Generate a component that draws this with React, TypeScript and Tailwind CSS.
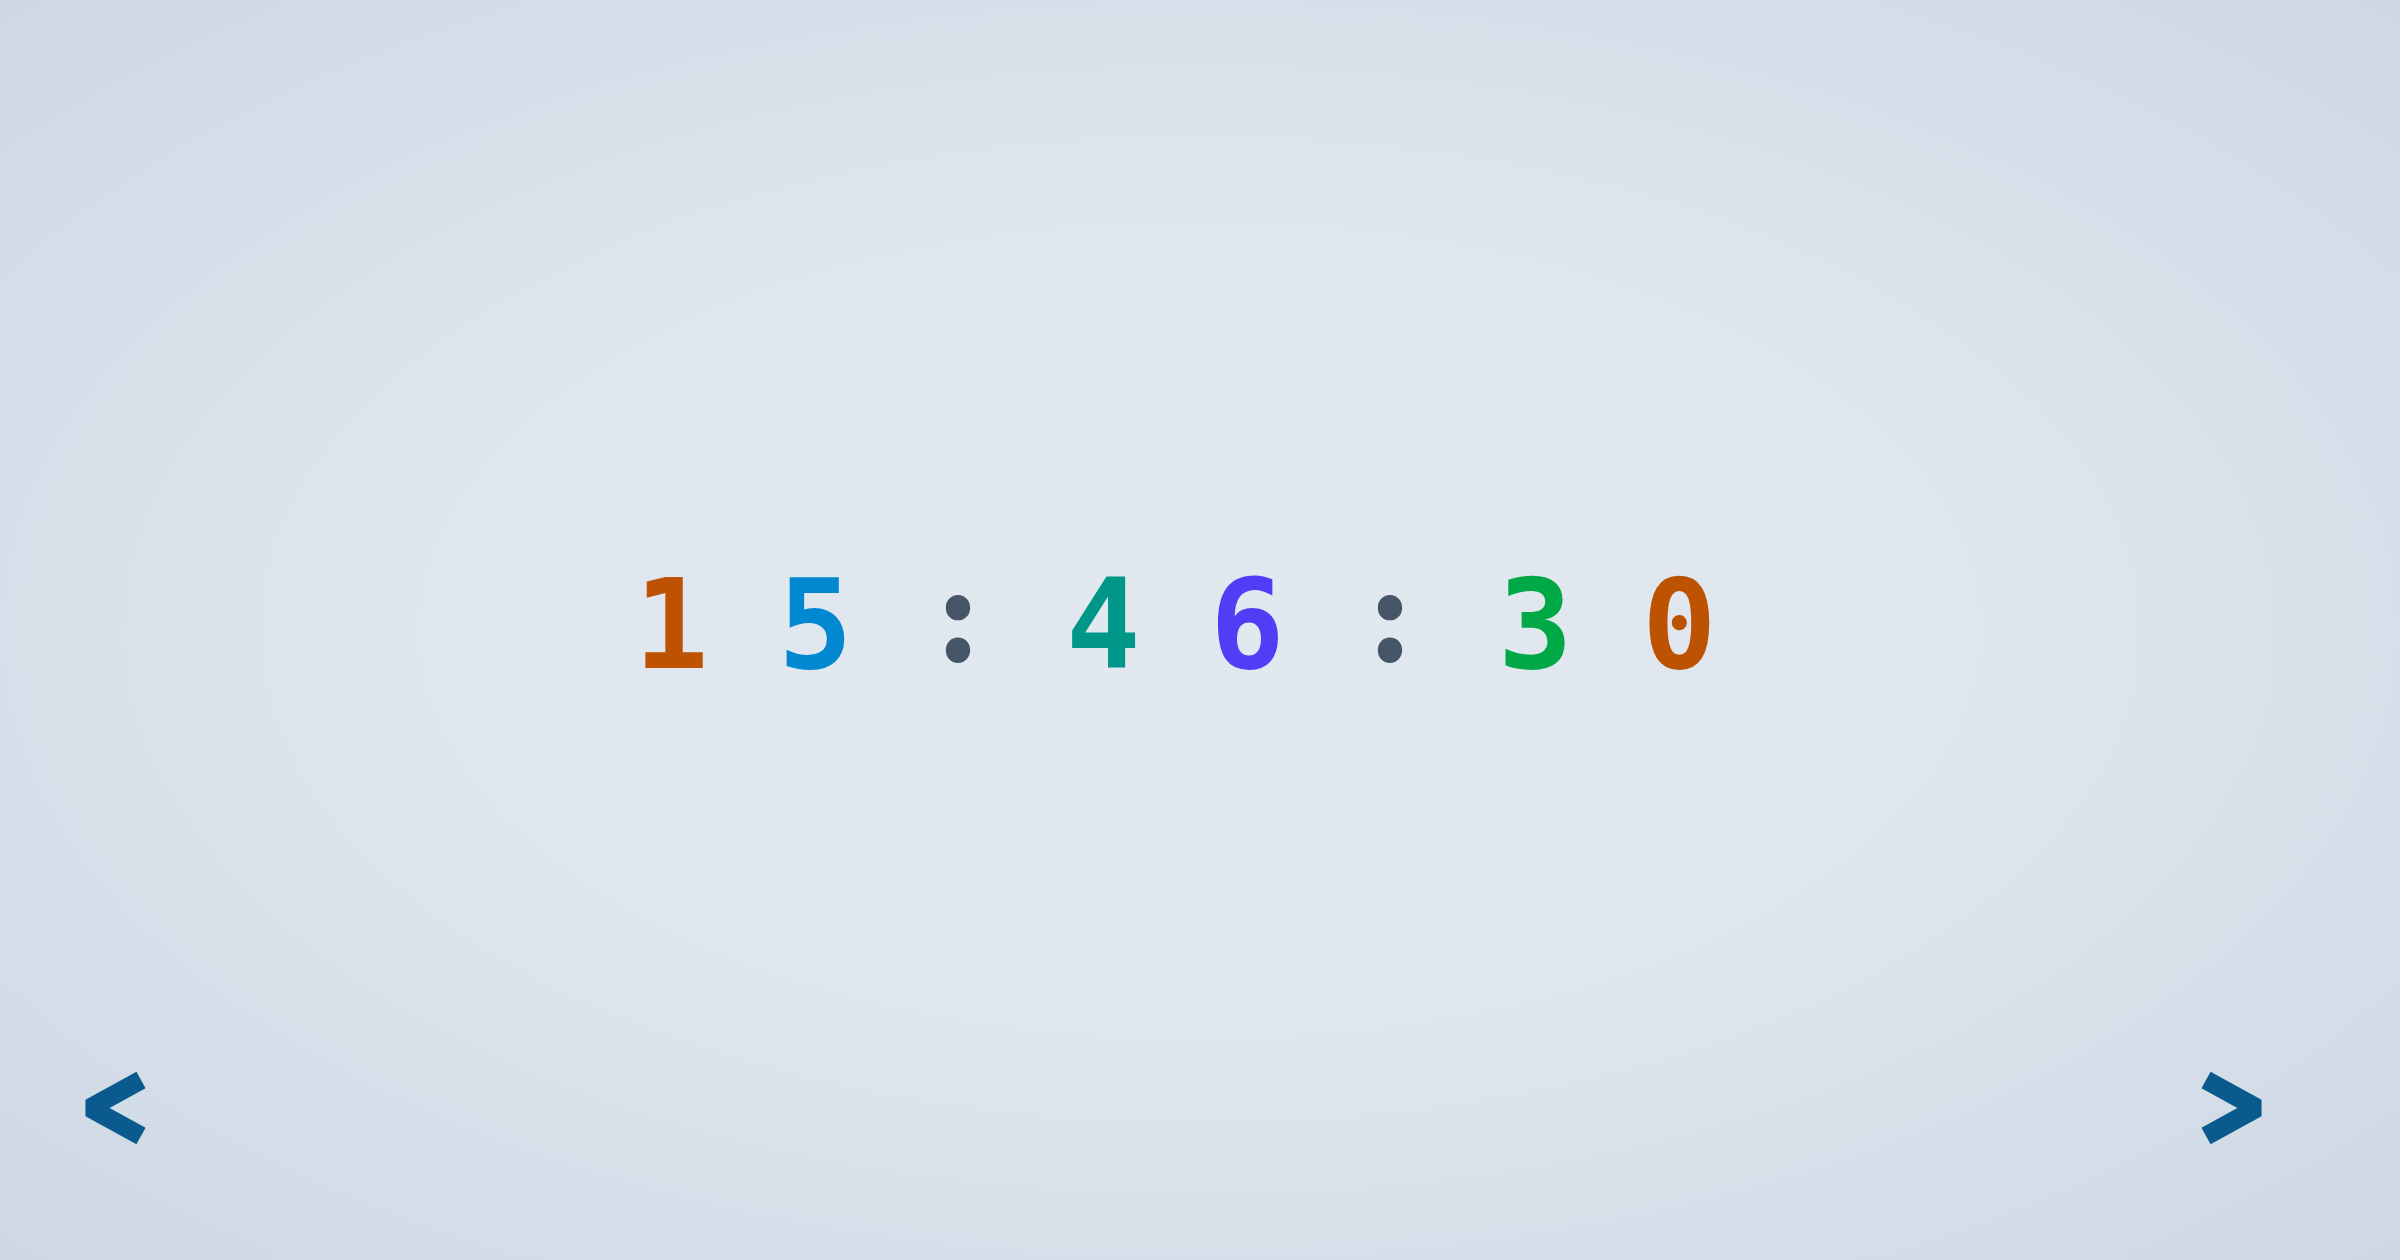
const digits = [
  { ch: "1", color: "text-[#bd5200]" },
  { ch: "5", color: "text-[#0288d1]" },
  { ch: ":", color: "text-[#475569]" },
  { ch: "4", color: "text-[#009688]" },
  { ch: "6", color: "text-[#523cf5]" },
  { ch: ":", color: "text-[#475569]" },
  { ch: "3", color: "text-[#00a846]" },
  { ch: "0", color: "text-[#bd5200]" },
];

const Chevron = ({ dir }: { dir: "left" | "right" }) => (
  <svg width="80" height="80" viewBox="0 0 80 80" fill="none" stroke="currentColor" strokeWidth="19" strokeLinecap="butt" strokeLinejoin="bevel">
    <polyline points={dir === "left" ? "61,10 10,38 61,66" : "16,10 67,38 16,66"} />
  </svg>
);

export default function App() {
  return (
    <div className="relative flex h-screen w-full items-center justify-center bg-[radial-gradient(ellipse_at_center,#e2e8f0_0%,#dfe6ee_45%,#cdd8e4_100%)] font-['DejaVu_Sans_Mono',monospace]">
      <div className="flex items-center gap-[72px] pr-[52px] pb-[10px] text-[124px] font-bold leading-none">
        {digits.map((d, i) =>
          d.ch === ":" ? (
            <span key={i} className={`${d.color} mb-[28px] w-[72px] text-center font-['Noto_Sans_CJK_SC',monospace] text-[115px] font-black`}>
              {d.ch}
            </span>
          ) : (
            <span key={i} className={`${d.color} w-[72px] text-center`}>
              {d.ch}
            </span>
          )
        )}
      </div>
      <nav className="absolute inset-x-0 bottom-[110px] flex justify-between pl-[80px] pr-[130px] text-[#0b5a8e]">
        <button aria-label="Previous">
          <Chevron dir="left" />
        </button>
        <button aria-label="Next">
          <Chevron dir="right" />
        </button>
      </nav>
    </div>
  );
}
